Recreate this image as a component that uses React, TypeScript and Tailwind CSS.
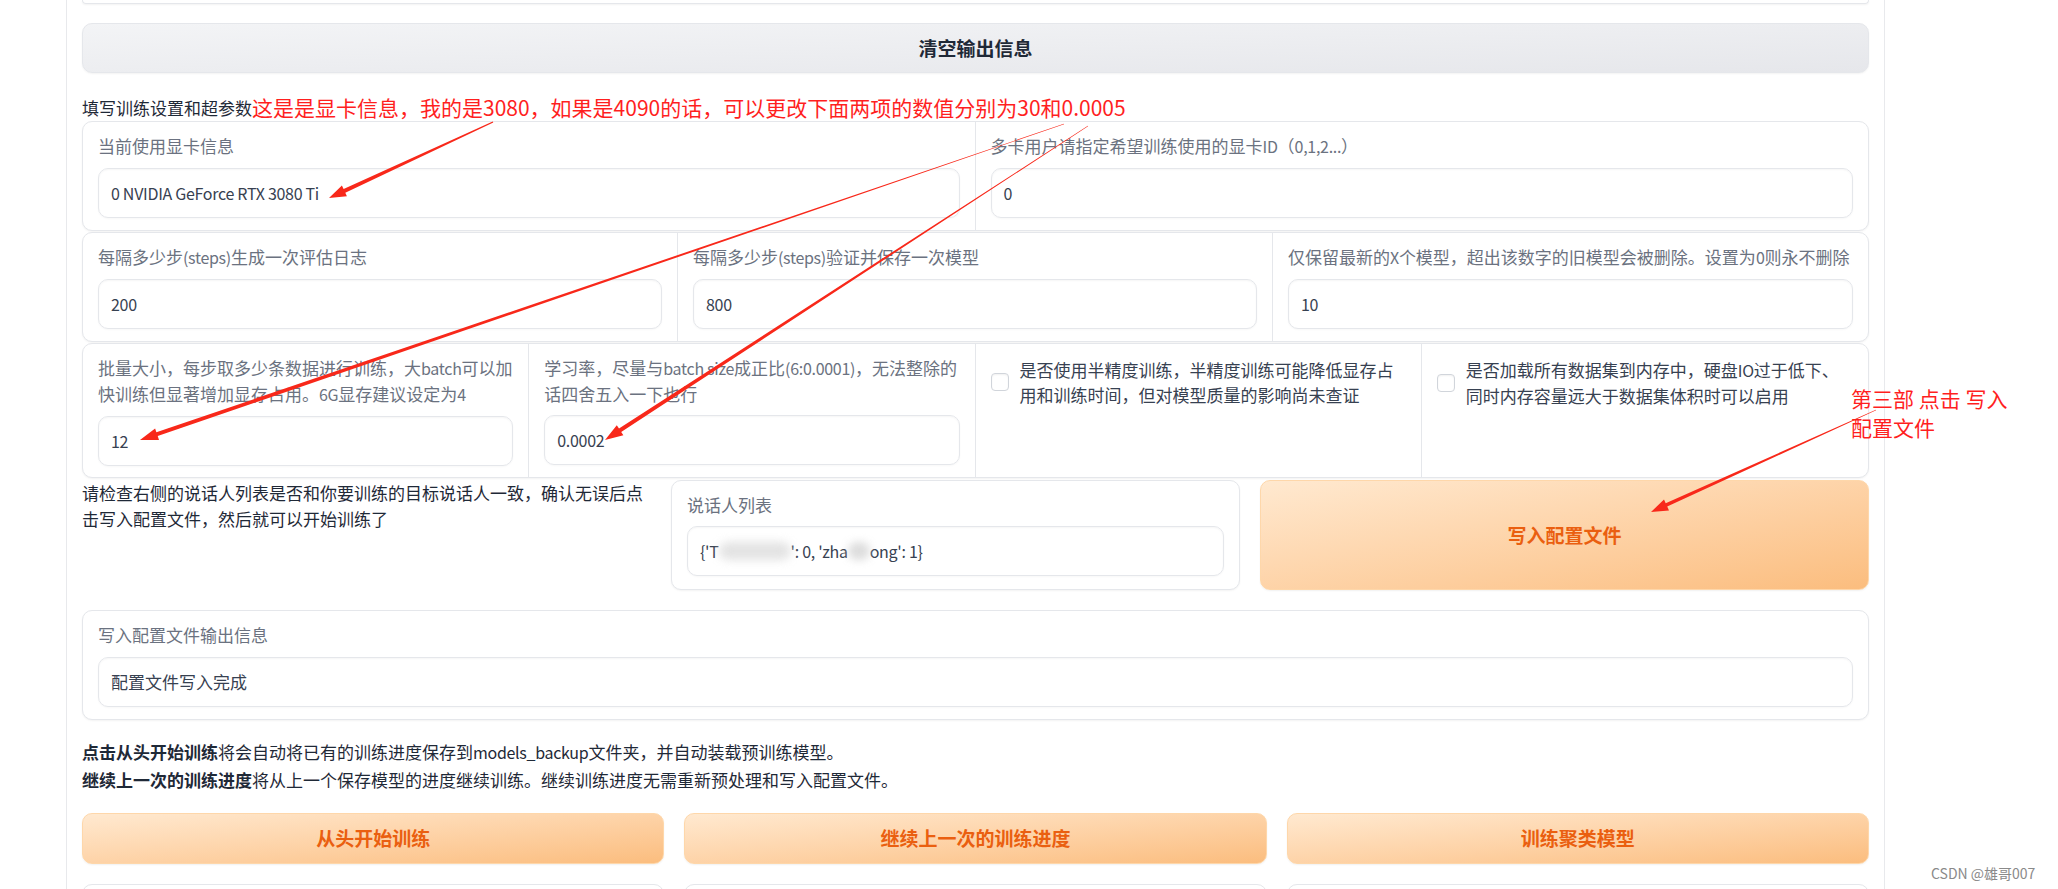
import React from 'react';

// tapered hand-drawn style arrow, thin at the tail and thicker near the head
const arrowPoints = (x1: number, y1: number, x2: number, y2: number, w1: number, w2: number, L: number, H: number) => {
    const dx = x2 - x1;
    const dy = y2 - y1;
    const len = Math.hypot(dx, dy);
    const ux = dx / len;
    const uy = dy / len;
    const nx = -uy;
    const ny = ux;
    const bx = x2 - ux * L;
    const by = y2 - uy * L;
    const pts = [
        [x1 + (nx * w1) / 2, y1 + (ny * w1) / 2],
        [bx + (nx * w2) / 2, by + (ny * w2) / 2],
        [bx + (nx * H) / 2, by + (ny * H) / 2],
        [x2, y2],
        [bx - (nx * H) / 2, by - (ny * H) / 2],
        [bx - (nx * w2) / 2, by - (ny * w2) / 2],
        [x1 - (nx * w1) / 2, y1 - (ny * w1) / 2],
    ];
    return pts.map((p) => `${p[0].toFixed(1)},${p[1].toFixed(1)}`).join(' ');
};

// latin runs are set a bit tighter so they keep the narrow look of the original font
const L: React.FC<{ children: React.ReactNode }> = ({ children }) => (
    <span className="text-[16px] tracking-[-0.3px]">{children}</span>
);

const Input: React.FC<{ children: React.ReactNode }> = ({ children }) => (
    <div className="h-[50px] rounded-[10px] border border-[#e5e7eb] bg-white shadow-[inset_0_1px_2px_rgba(0,0,0,0.04),0_1px_2px_rgba(0,0,0,0.03)] flex items-center px-[12px] text-[17px] leading-[24px] text-[#374151] whitespace-nowrap">
        {children}
    </div>
);

const Field: React.FC<{ label: React.ReactNode; value: React.ReactNode; twoLine?: boolean }> = ({ label, value, twoLine }) => (
    <div className={twoLine ? 'px-[15px] pt-[11px] pb-[11px] flex flex-col gap-[9px]' : 'px-[15px] pt-[12px] pb-[12px] flex flex-col gap-[10px]'}>
        <div className={twoLine ? 'text-[17px] leading-[25px] text-[#6b7280] whitespace-nowrap' : 'text-[17px] leading-[24px] text-[#6b7280] whitespace-nowrap'}>
            {label}
        </div>
        <Input>{value}</Input>
    </div>
);

const Check: React.FC<{ children: React.ReactNode }> = ({ children }) => (
    <div className="pl-[15px] pr-[10px] pt-[13px] flex items-start">
        <div className="flex items-center gap-[11px]">
            <div className="w-[18px] h-[18px] shrink-0 rounded-[4px] border border-[#d1d5db] bg-white shadow-[inset_0_1px_2px_rgba(0,0,0,0.06)]"></div>
            <div className="text-[17px] leading-[25px] text-[#374151] whitespace-nowrap">{children}</div>
        </div>
    </div>
);

const OrangeButton: React.FC<{ children: React.ReactNode; className?: string }> = ({ children, className }) => (
    <div className={`rounded-[10px] border border-[#fed7aa] bg-linear-to-br from-[#ffe9d0] to-[#fbbd7e] shadow-[0_1px_2px_rgba(0,0,0,0.06)] flex items-center justify-center text-[19px] font-semibold text-[#ea5f10] ${className ?? ''}`}>
        {children}
    </div>
);

const Card: React.FC<{ children: React.ReactNode; className?: string }> = ({ children, className }) => (
    <div className={`rounded-[10px] border border-[#e5e7eb] bg-white shadow-[0_1px_2px_rgba(0,0,0,0.05)] overflow-hidden ${className ?? ''}`}>
        {children}
    </div>
);

export default function App() {
    return (
        <div className="relative w-[2058px] h-[889px] overflow-hidden bg-white font-['Noto_Sans_CJK_SC','Noto_Sans',sans-serif]">
            <div className="ml-[66px] w-[1819px] h-full border-x border-[#e8e9ec] px-[15px]">
                {/* tail of the previous block */}
                <div className="h-[4px] rounded-b-[10px] border border-t-0 border-[#e5e7eb] shadow-[0_1px_2px_rgba(0,0,0,0.05)]"></div>

                <div className="mt-[19px] h-[50px] rounded-[10px] border border-[#e5e7eb] bg-linear-to-br from-[#f3f4f6] to-[#e6e7eb] flex items-center justify-center text-[19px] font-semibold text-[#1f2937] shadow-[0_1px_2px_rgba(0,0,0,0.05)]">
                    清空输出信息
                </div>

                <div className="mt-[22px] h-[26px] flex items-center whitespace-nowrap">
                    <span className="text-[17px] text-[#1f2937]">填写训练设置和超参数</span>
                    <span className="text-[21px] text-[#ff1f1f]">这是是显卡信息，我的是3080，如果是4090的话，可以更改下面两项的数值分别为30和0.0005</span>
                </div>

                <Card className="grid grid-cols-2 divide-x divide-[#e5e7eb]">
                    <Field label="当前使用显卡信息" value={<L>0 NVIDIA GeForce RTX 3080 Ti</L>} />
                    <Field label={<>多卡用户请指定希望训练使用的显卡<L>ID</L>（<L>0,1,2...</L>）</>} value={<L>0</L>} />
                </Card>

                <Card className="mt-px grid grid-cols-3 divide-x divide-[#e5e7eb]">
                    <Field label={<>每隔多少步<L>(steps)</L>生成一次评估日志</>} value={<L>200</L>} />
                    <Field label={<>每隔多少步<L>(steps)</L>验证并保存一次模型</>} value={<L>800</L>} />
                    <Field label={<>仅保留最新的<L>X</L>个模型，超出该数字的旧模型会被删除。设置为<L>0</L>则永不删除</>} value={<L>10</L>} />
                </Card>

                <Card className="mt-px grid grid-cols-4 divide-x divide-[#e5e7eb]">
                    <Field
                        twoLine
                        label={<>批量大小，每步取多少条数据进行训练，大<L>batch</L>可以加<br />快训练但显著增加显存占用。<L>6G</L>显存建议设定为<L>4</L></>}
                        value={<L>12</L>}
                    />
                    <Field
                        twoLine
                        label={<>学习率，尽量与<L>batch size</L>成正比<L>(6:0.0001)</L>，无法整除的<br />话四舍五入一下也行</>}
                        value={<L>0.0002</L>}
                    />
                    <Check>是否使用半精度训练，半精度训练可能降低显存占<br />用和训练时间，但对模型质量的影响尚未查证</Check>
                    <Check>是否加载所有数据集到内存中，硬盘<L>IO</L>过于低下、<br />同时内存容量远大于数据集体积时可以启用</Check>
                </Card>

                <div className="mt-[2px] flex">
                    <div className="w-[573px] text-[17px] leading-[26px] text-[#1f2937] whitespace-nowrap">
                        请检查右侧的说话人列表是否和你要训练的目标说话人一致，确认无误后点
                        <br />
                        击写入配置文件，然后就可以开始训练了
                    </div>
                    <Card className="ml-[16px] w-[569px] h-[110px]">
                        <div className="px-[15px] pt-[12px] flex flex-col gap-[9px]">
                            <div className="text-[17px] leading-[24px] text-[#6b7280]">说话人列表</div>
                            <Input>
                                <L>{"{'T"}</L>
                                <span className="inline-block w-[72px] h-[18px] rounded-full bg-[#dcdcdc] blur-[5px] opacity-80"></span>
                                <L>{"': 0, 'zha"}</L>
                                <span className="inline-block w-[22px] h-[18px] rounded-full bg-[#d4d4d4] blur-[4px] opacity-80"></span>
                                <L>{"ong': 1}"}</L>
                            </Input>
                        </div>
                    </Card>
                    <OrangeButton className="ml-[20px] flex-1 h-[110px]">写入配置文件</OrangeButton>
                </div>

                <Card className="mt-[20px]">
                    <Field label="写入配置文件输出信息" value="配置文件写入完成" />
                </Card>

                <div className="mt-[18px] text-[17px] leading-[27px] text-[#1f2937] whitespace-nowrap">
                    <div>
                        <span className="font-bold">点击从头开始训练</span>将会自动将已有的训练进度保存到<L>models_backup</L>文件夹，并自动装载预训练模型。
                    </div>
                    <div>
                        <span className="font-bold">继续上一次的训练进度</span>将从上一个保存模型的进度继续训练。继续训练进度无需重新预处理和写入配置文件。
                    </div>
                </div>

                <div className="mt-[20px] grid grid-cols-3 gap-[20px]">
                    <OrangeButton className="h-[51px]">从头开始训练</OrangeButton>
                    <OrangeButton className="h-[51px]">继续上一次的训练进度</OrangeButton>
                    <OrangeButton className="h-[51px]">训练聚类模型</OrangeButton>
                </div>

                <div className="mt-[20px] grid grid-cols-3 gap-[20px]">
                    <Card className="h-[90px]"><div></div></Card>
                    <Card className="h-[90px]"><div></div></Card>
                    <Card className="h-[90px]"><div></div></Card>
                </div>
            </div>

            {/* screenshot annotations */}
            <div className="absolute left-[1851px] top-[384px] text-[21px] leading-[29px] text-[#ff1f1f] whitespace-nowrap">
                第三部 点击 写入
                <br />
                配置文件
            </div>
            <svg className="absolute inset-0 pointer-events-none" width="2058" height="889" viewBox="0 0 2058 889">
                <polygon points={arrowPoints(493, 122, 329, 198, 1.2, 4, 17, 12)} fill="#f8281a" />
                <polygon points={arrowPoints(1064, 124, 140, 440, 0.5, 4, 18, 12)} fill="#f8281a" />
                <polygon points={arrowPoints(1088, 126, 605, 440, 0.5, 4, 18, 12)} fill="#f8281a" />
                <polygon points={arrowPoints(1876, 410, 1651, 512, 0.5, 3.6, 17, 12)} fill="#f8281a" />
            </svg>

            <div className="absolute left-[1931px] top-[863px] text-[14px] leading-[20px] text-[#8a8a8a] whitespace-nowrap">
                CSDN @雄哥007
            </div>
        </div>
    );
}
